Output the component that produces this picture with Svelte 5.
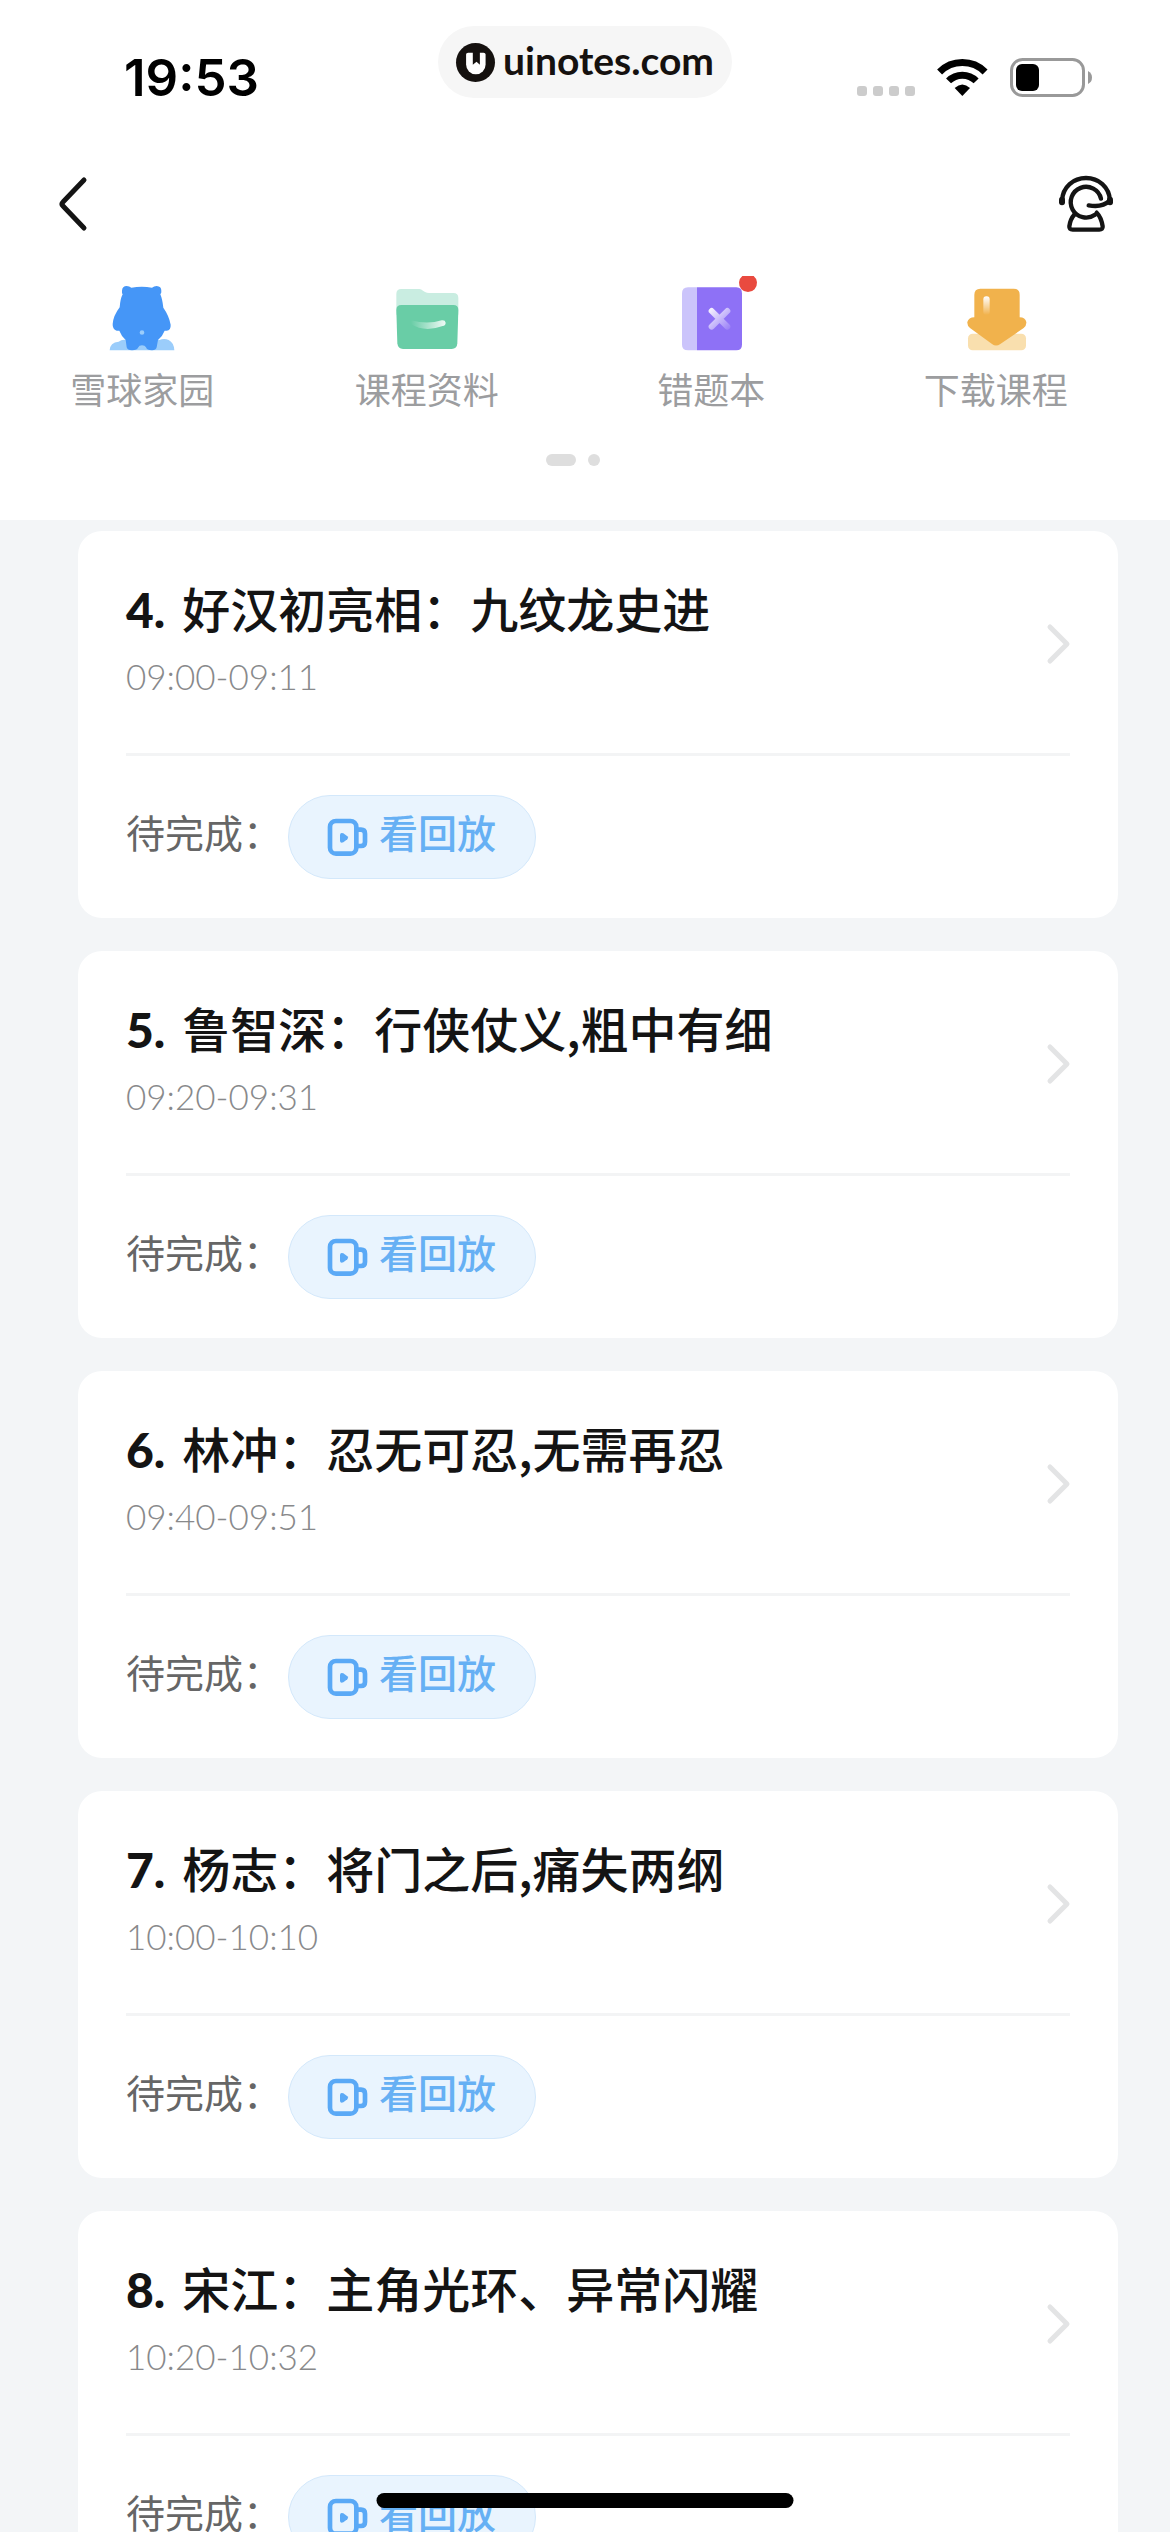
<script>
  const tools = [
    { id: "home", name: "雪球家园" },
    { id: "files", name: "课程资料" },
    { id: "mistakes", name: "错题本" },
    { id: "download", name: "下载课程" }
  ];

  const lessons = [
    { no: 4, title: "好汉初亮相：九纹龙史进", time: "09:00-09:11" },
    { no: 5, title: "鲁智深：行侠仗义,粗中有细", time: "09:20-09:31" },
    { no: 6, title: "林冲：忍无可忍,无需再忍", time: "09:40-09:51" },
    { no: 7, title: "杨志：将门之后,痛失两纲", time: "10:00-10:10" },
    { no: 8, title: "宋江：主角光环、异常闪耀", time: "10:20-10:32" }
  ];
</script>

<div class="screen">
  <header>
    <div class="status">
      <span class="clock">19:53</span>

      <a class="site" href="#site">
        <svg width="39" height="39" viewBox="76 82 116 116">
          <circle cx="134" cy="140" r="58" fill="#15110f" />
          <path fill="#fff" d="M106 116q0-5 6-5h46q6 0 6 5v30a29 29 0 0 1-58 0z" />
          <path fill="#15110f" d="M126 108h21v39l-10-9-11 9z" />
        </svg>
        <span>uinotes.com</span>
      </a>

      <div class="indicators">
        <span class="signal"><i></i><i></i><i></i><i></i></span>
        <svg class="wifi" width="51" height="39" viewBox="288 24 153 117">
          <g fill="none" stroke="#000" stroke-width="21">
            <path d="M295.8 65.8a96.5 96.5 0 0 1 136.4 0" />
            <path d="M322.6 92.6a58.5 58.5 0 0 1 82.8 0" />
          </g>
          <path d="M364 138l-23-24q23-21 46 0z" />
        </svg>
        <svg width="82" height="39" viewBox="0 0 82 39">
          <rect x="1.5" y="1.5" width="72" height="36" rx="11" fill="none" stroke="#999" stroke-width="3" />
          <rect x="6" y="6" width="23" height="27" rx="6" />
          <path fill="#999" d="M78 13q4 2 4 6.500t-4 6.500z" />
        </svg>
      </div>
    </div>

    <nav class="topbar">
      <button aria-label="返回">
        <svg width="32" height="56" viewBox="0 0 32 56">
          <path d="M28 4L7 26q-2 2 0 4l21 22" fill="none" stroke="#141414" stroke-width="5" stroke-linecap="round" />
        </svg>
      </button>
      <button aria-label="客服">
        <svg width="56" height="56" viewBox="654 378 168 168">
          <g fill="none" stroke="#141414" stroke-width="13" stroke-linecap="round" stroke-linejoin="round">
            <path d="M666 452c2-42 35-68 72-68s70 26 72 68" />
            <path d="M783 446a46 46 0 1 0-18 48" />
            <path d="M746 466q40 8 63-14" />
            <path d="M704 493q-13 14-16 36-1 10 10 10h80q11 0 10-10-4-27-18-41" />
          </g>
          <rect x="657" y="440" width="18" height="26" rx="9" fill="#141414" />
          <rect x="801" y="440" width="18" height="26" rx="9" fill="#141414" />
        </svg>
      </button>
    </nav>

    <div class="tools">
      {#each tools as tool}
        <button class="tool">
          {#if tool.id === "home"}
            <svg width="72" height="72" viewBox="200 66 216 216">
              <path fill="#9bcdfb" d="M211 271q1-24 27-26 10-8 24-5h98q15-6 28 0 16 8 17 31z" />
              <path
                fill="#4596f7"
                d="M248 92q1-14 14-14 8 0 14 5 32-6 62 0 6-5 14-5 14 1 14 14 1 6-3 11 6 14 9 40 17 24 22 51 1 16-12 18h-6q-6 16-20 28l-4 22q-2 9-14 9-16 0-18-9-3-6-12-6t-11 6q-3 9-19 9-14 0-16-9l-3-22q-13-12-19-28h-8q-13-4-12-20 2-25 21-50 2-26 9-39-3-4-2-11z"
              />
              <path fill="#9bcdfb" d="M301 218q0-7 7-7t7 7q0 6-7 6t-7-6z" />
            </svg>
          {:else if tool.id === "files"}
            <svg width="72" height="72" viewBox="1052 66 216 216">
              <defs>
                <linearGradient id="smile">
                  <stop offset="0" stop-color="#fff" stop-opacity="0" />
                  <stop offset="1" stop-color="#fff" stop-opacity="0.9" />
                </linearGradient>
              </defs>
              <path fill="#c9ede1" d="M1068 102q0-15 15-15h54q6 0 11 5l6 4q6 3 12 3h73q15 0 15 15v50h-186z" />
              <path fill="#69cda6" d="M1068 150q0-15 15-15h156q15 0 15 15l-3 100q-1 17-17 17h-146q-15 0-17-17z" />
              <path fill="url(#smile)" d="M1112 181q50 13 92 0 10-2 12 7 0 8-9 10-55 20-95-6z" />
            </svg>
          {:else if tool.id === "mistakes"}
            <svg width="72" height="72" viewBox="222 66 216 216">
              <defs>
                <linearGradient id="cross" gradientUnits="userSpaceOnUse" x1="328" y1="148" x2="386" y2="208">
                  <stop offset="0" stop-color="#fff" stop-opacity="0.9" />
                  <stop offset="1" stop-color="#fff" stop-opacity="0.1" />
                </linearGradient>
              </defs>
              <path fill="#cbc4fb" d="M288 82h-27q-18 0-18 18v154q0 17 18 17h27z" />
              <path fill="#8e71f6" d="M288 82h118q17 0 17 18v154q0 17-17 17h-118z" />
              <path d="M332 153l47 47M379 153l-47 47" stroke="url(#cross)" stroke-width="18" stroke-linecap="round" />
              <path fill="#e94a3f" d="M424 48h34a27 27 0 1 1-34 0z" />
            </svg>
          {:else}
            <svg width="72" height="72" viewBox="1074 66 216 216">
              <defs>
                <linearGradient id="shine" x2="0" y2="1">
                  <stop offset="0" stop-color="#fff" />
                  <stop offset="1" stop-color="#fff" stop-opacity="0" />
                </linearGradient>
              </defs>
              <rect x="1098" y="221" width="174" height="50" rx="14" fill="#f9dfae" />
              <path
                fill="#f1b24c"
                d="M1117 104q0-18 18-18h100q18 0 18 18v68q17 0 20 14 1 10-8 18l-70 48q-13 9-25 0l-66-48q-9-8-8-18 4-14 21-14z"
              />
              <rect x="1144" y="109" width="19" height="56" rx="9" fill="url(#shine)" />
            </svg>
          {/if}
          <span>{tool.name}</span>
        </button>
      {/each}
    </div>

    <div class="pager"><i class="current"></i><i></i></div>
  </header>

  <main>
    {#each lessons as lesson}
      <article class="card">
        <div class="head">
          <div>
            <h2><span class="no">{lesson.no}.</span>{lesson.title}</h2>
            <p class="time">{lesson.time}</p>
          </div>
          <svg width="24" height="40" viewBox="0 0 24 40">
            <path d="M4 4l17 17L4 38" fill="none" stroke="#e3e4e5" stroke-width="5" stroke-linecap="round" stroke-linejoin="round" />
          </svg>
        </div>
        <div class="foot">
          <span class="todo">待完成：</span>
          <button class="replay">
            <svg width="39" height="37" viewBox="144 99 117 111">
              <g fill="none" stroke="#5aa9f6" stroke-width="14">
                <rect x="150" y="105" width="79" height="98" rx="18" />
                <path d="M230 131h13q12 0 12 12v25q0 12-12 12h-13" />
              </g>
              <path fill="#5aa9f6" d="M180 146q1-8 10-4l12 9q5 4 0 9l-12 9q-9 4-10-4z" />
            </svg>
            <span>看回放</span>
          </button>
        </div>
      </article>
    {/each}
  </main>

  <div class="home-bar"></div>
</div>

<style>
  :global(body) {
    background: #f3f5f7;
  }

  .screen {
    display: flex;
    flex-direction: column;
    height: 100vh;
    overflow: hidden;
    font-family: Lato, "Noto Sans CJK SC", sans-serif;
    color: #141414;
  }

  button {
    padding: 0;
    border: 0;
    background: none;
    font: inherit;
    color: inherit;
    cursor: pointer;
  }

  svg {
    display: block;
    flex: none;
    overflow: visible;
  }

  header {
    flex: none;
    background: #fff;
  }

  /* status bar */
  .status {
    display: grid;
    grid-template-columns: 1fr auto 1fr;
    align-items: end;
    height: 82px;
    padding-top: 26px;
  }

  .clock {
    padding-left: 124px;
    font-family: Inter, sans-serif;
    font-size: 51px;
    font-weight: 600;
    line-height: 60px;
    color: #000;
  }

  .site {
    display: flex;
    align-items: center;
    align-self: start;
    gap: 8px;
    height: 72px;
    padding: 0 18px;
    border-radius: 36px;
    background: #f6f6f6;
    font-size: 39px;
    font-weight: 700;
    color: #15110f;
    text-decoration: none;
  }

  .site span {
    padding-bottom: 4px;
  }

  .indicators {
    display: flex;
    justify-content: flex-end;
    align-items: flex-end;
    padding: 0 78px 11px 0;
  }

  .signal {
    display: flex;
    gap: 6px;
    padding-bottom: 1px;
  }

  .signal i {
    width: 10px;
    height: 10px;
    border-radius: 3px;
    background: #ccc;
  }

  .wifi {
    margin: 0 22px;
  }

  /* navigation */
  .topbar {
    display: flex;
    justify-content: space-between;
    padding: 68px 56px 44px;
  }

  .tools {
    display: grid;
    grid-template-columns: repeat(4, 1fr);
    padding: 6px 32px 0 0;
  }

  .tool {
    display: flex;
    flex-direction: column;
    align-items: center;
    gap: 10px;
    font-size: 36px;
    line-height: 52px;
    color: #9c9d9f;
  }

  .pager {
    display: flex;
    justify-content: center;
    gap: 12px;
    padding: 38px 24px 54px 0;
  }

  .pager i {
    width: 12px;
    height: 12px;
    border-radius: 6px;
    background: #dedede;
  }

  .pager .current {
    width: 30px;
  }

  /* lesson list */
  main {
    flex: 1;
    min-height: 0;
    padding: 11px 52px 33px 78px;
    overflow-y: auto;
    scrollbar-width: none;
  }

  .card {
    padding: 0 48px;
    border-radius: 24px;
    background: #fff;
  }

  .card + .card {
    margin-top: 33px;
  }

  .head {
    display: flex;
    justify-content: space-between;
    align-items: center;
    padding: 46px 0 44px;
    border-bottom: 3px solid #f3f4f5;
  }

  h2 {
    margin: 0 0 6px;
    font-family: "Noto Sans CJK SC", sans-serif;
    font-size: 48px;
    font-weight: 500;
    line-height: 60px;
  }

  .no {
    margin-right: 17px;
    font-family: Lato, sans-serif;
    font-weight: 900;
    line-height: 48px;
  }

  .time {
    margin: 0;
    font-size: 35px;
    font-weight: 300;
    line-height: 66px;
    color: #88898b;
  }

  .foot {
    display: flex;
    align-items: center;
    gap: 6px;
    height: 162px;
  }

  .todo,
  .replay span {
    padding-bottom: 8px;
  }

  .todo {
    font-size: 39px;
    line-height: 60px;
    color: #666;
  }

  .replay {
    display: flex;
    align-items: center;
    gap: 12px;
    height: 84px;
    padding: 0 39px;
    border: 1px solid #d3e8fb;
    border-radius: 42px;
    background: #e9f4fe;
    font-size: 39px;
    font-weight: 500;
    line-height: 60px;
    color: #66b0f4;
  }

  .home-bar {
    position: fixed;
    bottom: 24px;
    left: 50%;
    width: 417px;
    height: 15px;
    border-radius: 8px;
    background: #000;
    transform: translateX(-50%);
  }
</style>
